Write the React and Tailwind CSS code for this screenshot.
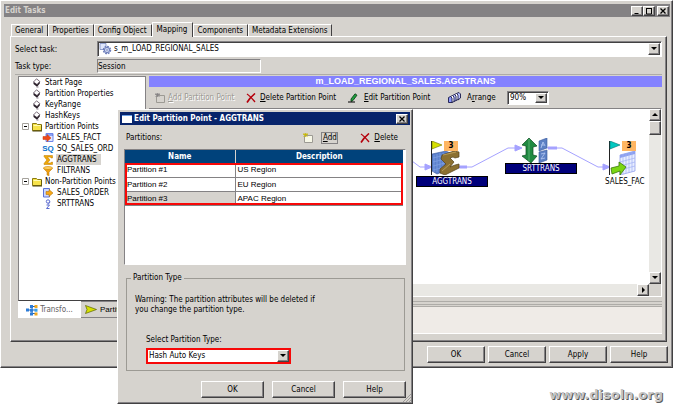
import React, { useState } from 'react';

const bevelOut = "border border-t-white border-l-white border-r-[#424142] border-b-[#424142] shadow-[inset_-1px_-1px_0_#848284]";
const bevelIn = "border border-t-[#848284] border-l-[#848284] border-r-white border-b-white shadow-[inset_1px_1px_0_#424142]";

function Caret({ dir = 'down' }) {
    const paths = { down: 'M1 2h6L4 5z', up: 'M1 5h6L4 2z', right: 'M3 1v6l3-3z' };
    return (
        <svg viewBox="0 0 8 8" className="h-2 w-2" fill="#000">
            <path d={paths[dir]} />
        </svg>
    );
}

function ScrollButton({ dir, label }) {
    return (
        <button type="button" aria-label={label} className={`flex h-3 w-3 shrink-0 items-center justify-center bg-[#d6d3ce] ${bevelOut}`}>
            <Caret dir={dir} />
        </button>
    );
}

function DropButton() {
    return (
        <span className={`pointer-events-none -ml-3 flex w-3 shrink-0 items-center justify-center bg-[#d6d3ce] ${bevelOut}`}>
            <Caret />
        </span>
    );
}

function PushButton({ children, className }) {
    return (
        <button type="button" className={`bg-[#d6d3ce] text-center ${bevelOut} ${className}`}>
            {children}
        </button>
    );
}

function Diamond() {
    return (
        <svg viewBox="0 0 10 10" className="h-[10px] w-[10px]">
            <path d="M4.500 .8L7.800 3.500 5 6.500 1.500 4z" fill="#fff" stroke="#5a4a5a" strokeWidth=".8" />
            <path d="M1.500 4L5 6.500l2.800-3v2L5 8.800 1.500 6z" fill="#2a202a" />
            <path d="M4.500 9h2" stroke="#6b5a6b" strokeWidth=".8" />
        </svg>
    );
}

function Folder() {
    return (
        <svg viewBox="0 0 10 10" className="h-[10px] w-[10px]">
            <path d="M.5 8.500v-7h4l1 1h4v6z" fill="#f7e34a" stroke="#8a7a10" />
            <path d="M1.500 3.500h7" stroke="#fffbb0" />
            <path d="M.5 9h9.500V3" stroke="#4a4208" fill="none" />
        </svg>
    );
}

function TargetIcon() {
    return (
        <svg viewBox="0 0 12 10" className="h-[10px] w-3">
            <path d="M4 .5h7v8H4z" fill="#dfe6ff" stroke="#6f86e8" />
            <path d="M4 2h7" stroke="#3a5be0" />
            <path d="M1 3.500h4V1.500L9 5 5 8.500v-2H1z" fill="#f04a18" stroke="#c83208" strokeWidth=".5" />
        </svg>
    );
}

function SqIcon() {
    return <span aria-hidden="true" className="w-3 text-center font-['Liberation_Sans',sans-serif] text-[8px] font-bold text-[#0872ce]">SQ</span>;
}

function SigmaIcon() {
    return (
        <svg viewBox="0 0 12 10" className="h-[10px] w-3">
            <path d="M2 .5h8.500v2.500H9L8.500 2H5.500l2.500 3-2.500 3h3L9.500 7h1v2.500H2V8.500L4.800 5 2 1.500z" fill="#efa808" stroke="#b87800" strokeWidth=".5" />
        </svg>
    );
}

function FilterIcon() {
    return (
        <svg viewBox="0 0 12 10" className="h-[10px] w-3">
            <path d="M1.500 2.500L5 6v3l2 .8V6l3.500-3.500z" fill="#f0a010" stroke="#b87000" strokeWidth=".5" />
            <ellipse cx="6" cy="2" rx="4.500" ry="1.500" fill="#ffd060" stroke="#c88000" strokeWidth=".6" />
        </svg>
    );
}

function SourceIcon() {
    return (
        <svg viewBox="0 0 12 10" className="h-[10px] w-3">
            <path d="M1.500 .5h6v8.500h-6z" fill="#cdd8ff" stroke="#5a72d8" />
            <path d="M4 3.500h3V1.500L11 5 7 8.500v-2H4z" fill="#f7a818" stroke="#a86800" strokeWidth=".5" />
        </svg>
    );
}

function SorterIcon() {
    return (
        <svg viewBox="0 0 12 10" className="h-[10px] w-3" fill="none" stroke="#5a6ad0">
            <circle cx="6" cy="2.500" r="1.700" />
            <path d="M7.700 2.500c0 1.500-.5 2.300-2 2.500M4.500 6h3L4.500 9.500h3" />
        </svg>
    );
}

const tree = [
    { name: 'Start Page', icon: Diamond, level: 0 },
    { name: 'Partition Properties', icon: Diamond, level: 0 },
    { name: 'KeyRange', icon: Diamond, level: 0 },
    { name: 'HashKeys', icon: Diamond, level: 0 },
    { name: 'Partition Points', icon: Folder, level: 0, open: true },
    { name: 'SALES_FACT', icon: TargetIcon, level: 1 },
    { name: 'SQ_SALES_ORD', icon: SqIcon, level: 1 },
    { name: 'AGGTRANS', icon: SigmaIcon, level: 1, selected: true },
    { name: 'FILTRANS', icon: FilterIcon, level: 1 },
    { name: 'Non-Partition Points', icon: Folder, level: 0, open: true },
    { name: 'SALES_ORDER', icon: SourceIcon, level: 1 },
    { name: 'SRTTRANS', icon: SorterIcon, level: 1 },
];

function TreeView() {
    return (
        <ul className="h-[225px] overflow-hidden border border-t-[#848284] border-l-[#848284] border-r-[#848284] border-b-[#424142] bg-white pl-[3px]">
            {tree.map((item) => {
                const Icon = item.icon;
                return (
                    <li key={item.name} className={`flex h-[11px] items-center whitespace-nowrap ${item.level ? 'pl-5' : ''}`}>
                        {item.level === 0 && (
                            <span className="w-[10px] shrink-0">
                                {item.open && (
                                    <svg viewBox="0 0 7 7" className="h-[7px] w-[7px]">
                                        <path d="M.5 .5h6v6h-6z" fill="#fff" stroke="#a5a29c" />
                                        <path d="M2 3.500h3" stroke="#000" />
                                    </svg>
                                )}
                            </span>
                        )}
                        <span className="flex shrink-0 items-center"><Icon /></span>
                        <span className={`ml-[2px] px-px leading-[11px] ${item.selected ? 'bg-[#d6d3ce] pr-1' : ''}`}>{item.name}</span>
                    </li>
                );
            })}
        </ul>
    );
}

function TabStrip() {
    const tabs = ['General', 'Properties', 'Config Object', 'Mapping', 'Components', 'Metadata Extensions'];
    const [active, setActive] = useState('Mapping');
    return (
        <div role="tablist" className="flex items-end pl-px">
            {tabs.map((tab) => (
                <button
                    key={tab}
                    type="button"
                    role="tab"
                    aria-selected={tab === active}
                    onClick={() => setActive(tab)}
                    className={tab === active
                        ? "relative -mb-px h-[15px] border-t border-l border-r border-t-white border-l-white border-r-[#424142] bg-[#d6d3ce] pr-[5px] pb-[2px] pl-1"
                        : "h-3 border-t border-l border-r border-t-white border-l-white border-r-[#424142] pr-1 pl-[3px]"}
                >
                    {tab}
                </button>
            ))}
        </div>
    );
}

function DeleteIcon() {
    return (
        <svg viewBox="0 0 10 10" className="h-[10px] w-[10px]" fill="none" stroke="#b5000c">
            <path d="M1 1c3 2 5 4.500 8 8" strokeWidth="1.300" />
            <path d="M9 .5C6 3 3 6 1 9.500" strokeWidth="1.600" />
        </svg>
    );
}

function NewIcon({ muted }) {
    return (
        <svg viewBox="0 0 10 10" className="h-[10px] w-[10px]">
            <path d="M1.500 2.500h8v7h-8z" fill={muted ? '#d6d3ce' : '#f7f7e7'} stroke="#9c9a94" />
            <path d="M0 1.500h5M2.500 0v4M.5 0l4 4M4.500 0l-4 4" stroke={muted ? '#848284' : '#c8b800'} strokeWidth=".8" />
        </svg>
    );
}

function PencilIcon() {
    return (
        <svg viewBox="0 0 10 10" className="h-[10px] w-[10px]">
            <path d="M3 6L7 .8l2 1.400L5 7.500l-2 1z" fill="#20a040" stroke="#083810" strokeWidth=".8" />
            <path d="M0 9h7" stroke="#000" />
        </svg>
    );
}

function ArrangeIcon() {
    return (
        <svg viewBox="0 0 13 11" className="h-[11px] w-[13px]" stroke="#18184a" strokeWidth=".9">
            <path d="M8.500 1.500l2.500-1 1.500 1.500v4l-2.500 2z" fill="#b8c0ff" />
            <path d="M6.500 2.500l2-1 1.500 1.500v4.500l-2 1z" fill="#fff" />
            <path d="M4.500 3.500l2-1L8 4v4.500l-2 1z" fill="#b8c0ff" />
            <path d="M2.500 4.500l2-1L6 5v4.500l-2 1z" fill="#fff" />
            <path d="M.5 5.500l2-1L4 6v4.500H.5z" fill="#8c98f8" />
        </svg>
    );
}

function Toolbar() {
    return (
        <div className="flex h-[21px] items-center whitespace-nowrap pl-[6px]">
            <button type="button" disabled className="flex w-[91px] items-center gap-[3px] text-[#9c9a94] [text-shadow:1px_1px_0_#fff]">
                <NewIcon muted /><span><u>A</u>dd Partition Point</span>
            </button>
            <button type="button" className="flex w-[102px] items-center gap-1">
                <DeleteIcon /><span><u>D</u>elete Partition Point</span>
            </button>
            <button type="button" className="flex w-[100px] items-center gap-[6px]">
                <PencilIcon /><span><u>E</u>dit Partition Point</span>
            </button>
            <button type="button" className="flex w-[59px] items-center gap-[6px]">
                <ArrangeIcon /><span>A<u>r</u>range</span>
            </button>
            <div className={`flex h-[14px] w-[42px] bg-white p-px ${bevelIn}`}>
                <select aria-label="Zoom" className="w-full appearance-none pl-px leading-[10px]">
                    <option>90%</option>
                </select>
                <DropButton />
            </div>
        </div>
    );
}

function Flag({ color, dark }) {
    return (
        <>
            <path d="M.5 0v34" stroke="#222" />
            <path d="M1 0l10 4-10 4z" fill={color} stroke={dark} strokeWidth=".6" />
        </>
    );
}

function Badge({ children }) {
    return <span className="absolute top-0 left-[13px] h-[10px] w-[14px] bg-[#ffb663] text-center leading-[10px] font-bold">{children}</span>;
}

function Canvas() {
    return (
        <div className={`flex h-[189px] flex-col bg-[#e9e8e4] ${bevelIn}`}>
            <div className="flex min-h-0 flex-1">
                <div className="relative min-w-0 flex-1 overflow-hidden bg-white">
                    <svg className="absolute top-0 left-0 h-[160px] w-[500px]" viewBox="150 109 500 160" fill="none" stroke="#a5a2ff">
                        <path d="M400 152l20 15h10M459 167h13l36-19h13M547 148h15l36 19h11" />
                        <path d="M459 167h8M548 148h9" strokeWidth="3" />
                        <path d="M425 164l7 3-7 3zM515 145l7 3-7 3zM603 164l7 3-7 3z" fill="#a5a2ff" />
                    </svg>

                    {/* aggregator */}
                    <div className="absolute top-[32px] left-[281px]">
                        <svg viewBox="0 0 30 34" className="h-[34px] w-[30px]">
                            <path d="M1 13l14-3 4 2v16l-13 5-5-3z" fill="#5c80cc" stroke="#38589c" strokeWidth=".6" />
                            <path d="M3 14v17M6 13v18M9 12v18M12 12v17M2 17l16-4M2 21l16-4M2 25l16-4M2 29l16-4" stroke="#88a8e8" strokeWidth=".6" />
                            <path d="M11 14l12-4 5 1v5l-4 1-2-1-3 1 4 4-4 5 5-2 4-1v4l-14 7-5-2v-4l6-5-5-5z" fill="#8c7031" stroke="#54401a" strokeWidth=".7" />
                            <path d="M12 14l13-3M11 30l8-7" stroke="#b89c58" />
                            <Flag color="#d6e000" dark="#6b7000" />
                        </svg>
                        <Badge>3</Badge>
                    </div>
                    <div className="absolute top-[67px] left-[266px] h-[11px] w-[72px] border border-black bg-[#00007b] text-center leading-[9px] text-white">AGGTRANS</div>

                    {/* sorter */}
                    <svg viewBox="0 0 26 25" className="absolute top-[29px] left-[372px] h-[25px] w-[26px]">
                        <path d="M7 0l8 8-4 1v8l4 1-6 7-9-7 4-1V8L0 7z" fill="#218a42" stroke="#0c4a20" strokeWidth=".7" />
                        <path d="M7 1v22" stroke="#58b070" />
                        <path d="M17 3l8-3v10l-8 3zM17 14l8-2v10l-8 3z" fill="#5c80c4" stroke="#38589c" strokeWidth=".6" />
                        <path d="M19 10l2-6 2 4M19 7h3M19 16l4-1-4 6 4-1" fill="none" stroke="#b8ccf4" strokeWidth=".8" />
                    </svg>
                    <div className="absolute top-[54px] left-[355px] h-[11px] w-[72px] border border-black bg-[#00007b] text-center leading-[9px] text-white">SRTTRANS</div>

                    {/* target */}
                    <div className="absolute top-[32px] left-[459px]">
                        <svg viewBox="0 0 30 34" className="h-[34px] w-[30px]">
                            <path d="M11 14l15-4v20l-15 4z" fill="#e8eeff" stroke="#8494e8" strokeWidth=".7" />
                            <path d="M11 14l15-4v3l-15 4z" fill="#8ca0f0" />
                            <path d="M14 13v20M17 13v19M20 12v20M23 11v20M11 21l15-4M11 25l15-4M11 29l15-4" stroke="#a0b0f4" strokeWidth=".7" />
                            <Flag color="#00c8c0" dark="#007070" />
                            <path d="M2 27l8-2v-4l7 5-6 8v-4l-8 3z" fill="#7bd614" stroke="#3a7808" strokeWidth=".8" />
                        </svg>
                        <Badge>3</Badge>
                    </div>
                    <div className="absolute top-[67px] left-[455px] leading-[11px] whitespace-nowrap">SALES_FAC</div>
                </div>
                <div className="flex w-3 flex-col justify-between">
                    <div>
                        <ScrollButton dir="up" label="Scroll up" />
                        <div className={`h-[14px] w-3 bg-[#d6d3ce] ${bevelOut}`} />
                    </div>
                    <ScrollButton dir="down" label="Scroll down" />
                </div>
            </div>
            <div className="flex h-3 shrink-0 justify-end">
                <ScrollButton dir="right" label="Scroll right" />
                <div className="w-3 bg-[#d6d3ce]" />
            </div>
        </div>
    );
}

function TitleButton({ label, children }) {
    return (
        <button type="button" aria-label={label} className={`flex h-[10px] w-3 items-center justify-center bg-[#d6d3ce] ${bevelOut}`}>
            <svg viewBox="0 0 8 8" className="h-2 w-2" fill="none" stroke="#000">{children}</svg>
        </button>
    );
}

function TaskWindow() {
    return (
        <div className={`mr-[2px] bg-[#d6d3ce] p-[3px] pr-[2px] pb-1 ${bevelOut}`}>
            <div className="flex h-[13px] items-center bg-[#848284] pr-px">
                <h1 className="flex-1 pl-px font-bold text-[#d6d3ce]">Edit Tasks</h1>
                <TitleButton label="Minimize"><path d="M1.500 6.500h4" /></TitleButton>
                <TitleButton label="Maximize"><path d="M1 1.500h6M1.500 1v6h5V1" /></TitleButton>
                <span className="w-[2px]" />
                <TitleButton label="Close"><path d="M1.500 1.500l5 5M6.500 1.500l-5 5" strokeWidth="1.300" /></TitleButton>
            </div>

            <div className="pt-[5px] pr-[3px] pl-[6px]">
                <TabStrip />
                <div className="border border-t-white border-l-white border-r-[#424142] border-b-[#424142] px-1 pt-1 pb-[7px] shadow-[inset_-1px_-1px_0_#848284]">
                    <div className="flex h-4 items-center">
                        <label htmlFor="task" className="w-[82px] shrink-0">Select task:</label>
                        <div className={`flex h-4 flex-1 items-center bg-white p-px ${bevelIn}`}>
                            <svg viewBox="0 0 14 12" className="mr-px h-3 w-[14px] shrink-0" fill="#dfe6fb" stroke="#6b7cb8">
                                <path d="M1 .5h6v6H1z" strokeWidth=".7" />
                                <circle cx="8" cy="7" r="3.500" strokeWidth="1.500" strokeDasharray="1.800 .9" />
                                <circle cx="8" cy="7" r="2.600" />
                                <circle cx="8" cy="7" r="1" fill="#fff" strokeWidth=".7" />
                            </svg>
                            <select id="task" className="min-w-0 flex-1 appearance-none leading-3">
                                <option>s_m_LOAD_REGIONAL_SALES</option>
                            </select>
                            <span className="flex h-3"><DropButton /></span>
                        </div>
                    </div>
                    <div className="mt-[2px] flex h-[14px] items-center">
                        <label htmlFor="type" className="w-[82px] shrink-0">Task type:</label>
                        <input id="type" readOnly value="Session" className="h-[14px] w-[164px] border border-t-[#848284] border-l-[#848284] border-r-white border-b-white bg-[#d6d3ce]" />
                    </div>

                    <div className="mt-px flex gap-[3px] border-t border-[#aeaca8] pt-px pl-[3px]">
                        <div className="w-[128px] shrink-0">
                            <TreeView />
                            <div className="flex h-[17px] overflow-hidden whitespace-nowrap">
                                <button type="button" className="flex w-[63px] items-center justify-center gap-[2px] bg-white text-[#63615f]">
                                    <svg viewBox="0 0 12 12" className="h-3 w-3">
                                        <path d="M2 6h3M6 3v6M6 2.500h4M6 9.500h4M6 6h4" stroke="#2060b0" />
                                        <path d="M0 4.500h3v3H0zM4 1h3v3H4zM4 4.700h3v3H4zM4 8.500h3v3H4z" fill="#2c7cd8" />
                                        <path d="M8.500 1h3v3h-3zM8.500 8.500h3v3h-3z" fill="#f0a820" />
                                        <path d="M8.500 4.700h3v3h-3z" fill="#38a0e8" />
                                    </svg>
                                    Transfo...
                                </button>
                                <button type="button" className="flex flex-1 items-center gap-[3px] border-t border-b border-[#848284] pl-1 font-['Liberation_Sans',sans-serif]">
                                    <svg viewBox="0 0 12 9" className="h-[9px] w-3 shrink-0">
                                        <path d="M.5 .5l11 4-11 4 1.500-4z" fill="#d6e000" stroke="#5a6400" strokeWidth=".7" />
                                    </svg>
                                    Partitions
                                </button>
                            </div>
                        </div>

                        <div className="min-w-0 flex-1">
                            <h2 className="h-[11px] bg-[#8482ff] text-center font-['Liberation_Sans',sans-serif] text-[9px] leading-[10px] font-bold text-white">
                                m_LOAD_REGIONAL_SALES.AGGTRANS
                            </h2>
                            <Toolbar />
                            <Canvas />
                            <div className="mt-1 h-1 border-t border-b border-[#aeaca8]" />
                            <div className="mt-px h-[28px] border-t border-b border-t-[#aeaca8] border-b-white bg-[#efebe7]" />
                        </div>
                    </div>
                </div>
            </div>

            <div className="flex justify-end gap-[3px] pt-1 pr-[2px]">
                <PushButton className="h-[17px] w-[58px]">OK</PushButton>
                <PushButton className="h-[17px] w-[58px]">Cancel</PushButton>
                <PushButton className="h-[17px] w-[58px]">Apply</PushButton>
                <PushButton className="h-[17px] w-[58px]">Help</PushButton>
            </div>
        </div>
    );
}

const partitions = [
    { name: 'Partition #1', description: 'US Region' },
    { name: 'Partition #2', description: 'EU Region' },
    { name: 'Partition #3', description: 'APAC Region' },
];

function PartitionDialog() {
    return (
        <div role="dialog" aria-labelledby="dialog-title" className={`absolute top-[109px] left-[117px] w-[296px] bg-[#d6d3ce] p-[2px] pb-[5px] ${bevelOut}`}>
            <div className="flex h-[13px] items-center gap-[2px] bg-[#08246b] px-[2px]">
                <svg viewBox="0 0 10 8" className="h-2 w-[10px]"><path d="M0 0h10v8H0z" fill="#fff" /><path d="M0 .5h10" stroke="#6ba0e8" /></svg>
                <h2 id="dialog-title" className="flex-1 font-bold whitespace-nowrap text-white">Edit Partition Point - AGGTRANS</h2>
                <TitleButton label="Close"><path d="M1.500 1.500l5 5M6.500 1.500l-5 5" strokeWidth="1.300" /></TitleButton>
            </div>

            <div className="px-1">
                <div className="flex h-6 items-center pt-px pr-2 pl-[2px]">
                    <span className="flex-1">Partitions:</span>
                    <NewIcon />
                    <button type="button" className="mr-[22px] ml-2 h-3 w-[17px] border border-[#848284] leading-[10px]"><u>A</u>dd</button>
                    <button type="button" className="flex items-center gap-1"><DeleteIcon /><span><u>D</u>elete</span></button>
                </div>

                <div className="h-[116px] border border-t-[#848284] border-l-[#848284] border-r-white border-b-white bg-white pr-[2px]">
                    <table className="w-full table-fixed border-collapse font-['Liberation_Sans',sans-serif]">
                        <thead className="bg-[#00427b] font-['DejaVu_Sans_Condensed','DejaVu_Sans',sans-serif] text-white">
                            <tr>
                                <th className="h-[13px] w-[110px] border-r border-[#d6d3ce] p-0 text-center font-bold">Name</th>
                                <th className="h-[13px] p-0 text-center font-bold">Description</th>
                            </tr>
                        </thead>
                        <tbody className="outline-2 -outline-offset-2 outline-[#f70808]">
                            {partitions.map((row, i) => (
                                <tr key={row.name} className="h-[14px] border-b border-[#848284]">
                                    <td className={`border-r border-[#848284] py-0 pl-[2px] leading-[13px] ${i === 2 ? 'bg-[#d6d3ce]' : ''}`}>{row.name}</td>
                                    <td className="py-0 pl-[2px] leading-[13px]">{row.description}</td>
                                </tr>
                            ))}
                        </tbody>
                    </table>
                </div>

                <fieldset className="mt-2 mr-px ml-[2px] border border-[#9c9a94] px-2 pb-[6px]">
                    <legend className="-ml-1 px-[2px] leading-[10px]">Partition Type</legend>
                    <p className="pt-3 leading-[10px]">
                        Warning: The partition attributes will be deleted if<br />you change the partition type.
                    </p>
                    <div className="pt-5 pl-[11px]">
                        <label htmlFor="ptype" className="block leading-[10px]">Select Partition Type:</label>
                        <div className="mt-[3px] flex h-4 w-[145px] border-2 border-[#f70808] bg-white">
                            <select id="ptype" className="w-full appearance-none pl-px leading-3">
                                <option>Hash Auto Keys</option>
                            </select>
                            <DropButton />
                        </div>
                    </div>
                </fieldset>

                <div className="mt-[10px] flex justify-end gap-2">
                    <PushButton className="h-[17px] w-[63px]">OK</PushButton>
                    <PushButton className="h-[17px] w-[63px]">Cancel</PushButton>
                    <PushButton className="h-[17px] w-[63px]">Help</PushButton>
                </div>
            </div>
            <svg viewBox="0 0 8 8" className="absolute right-px bottom-px h-2 w-2" stroke="#848284" strokeWidth=".7"><path d="M0 8l8-8M3 8l5-5M6 8l2-2" /></svg>
        </div>
    );
}

function App() {
    return (
        <div className="relative overflow-hidden bg-white font-['DejaVu_Sans_Condensed','DejaVu_Sans',sans-serif] text-[8px] leading-[11px] text-black">
            <TaskWindow />
            <PartitionDialog />
            <footer className="pt-[18px] pr-3 pb-px text-right font-['DejaVu_Sans',sans-serif] text-[13px] leading-[18px] font-bold text-[#c4c4c4] [text-shadow:1px_1px_0_#5a5a5a]">
                www.disoln.org
            </footer>
        </div>
    );
}

export default App
